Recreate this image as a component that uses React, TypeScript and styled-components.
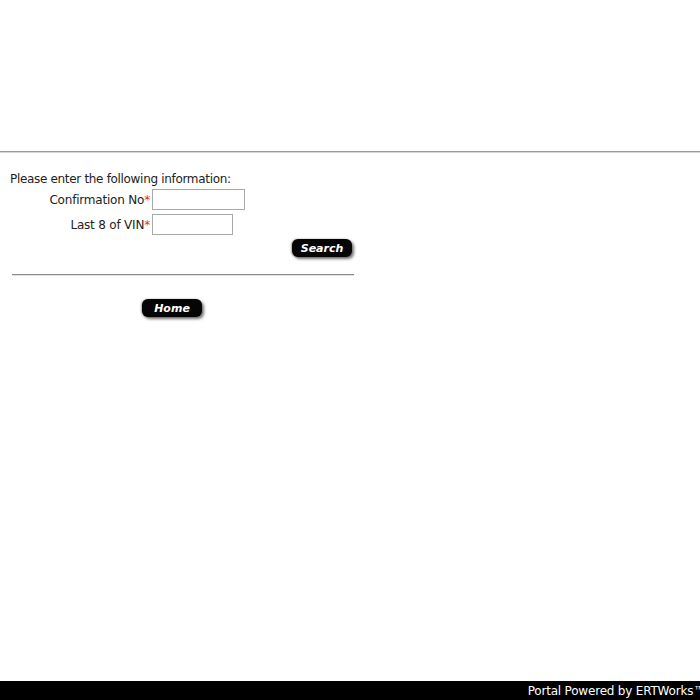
import React from "react";
import styled, { createGlobalStyle } from "styled-components";

const GlobalStyle = createGlobalStyle`
  html, body {
    margin: 0;
    padding: 0;
    background: #ffffff;
  }
  body {
    font-family: "DejaVu Sans", Verdana, sans-serif;
    font-size: 12px;
    color: #222;
  }
`;

const Page = styled.div`
  min-height: 100vh;
  display: flex;
  flex-direction: column;
`;

const Banner = styled.div`
  height: 151px;
  border-bottom: 1px solid #9a9a9a;
  box-shadow: 0 1px 0 #d6d6d6;
`;

const Main = styled.main`
  flex: 1;
  padding: 20px 0 0 10px;
`;

const Intro = styled.div`
  font-size: 12px;
  line-height: 15px;
  letter-spacing: -0.32px;
`;

const FormGrid = styled.div`
  display: grid;
  grid-template-columns: 140px auto;
  column-gap: 2px;
  row-gap: 4px;
  margin-top: 2px;
  width: 344px;
`;

const Label = styled.label`
  text-align: right;
  align-self: center;
  font-size: 12px;
  letter-spacing: -0.2px;
`;

const Required = styled.span`
  color: #e03030;
`;

const Field = styled.input<{ $w: number }>`
  box-sizing: border-box;
  width: ${(p) => p.$w}px;
  height: 21px;
  border: 1px solid #a8a8a8;
  padding: 1px 3px;
  font-family: inherit;
  font-size: 12px;
  background: #fff;
  outline: none;
`;

const ButtonRow = styled.div<{ $align: string; $mt: number }>`
  display: flex;
  justify-content: ${(p) => p.$align};
  width: 342px;
  margin-top: ${(p) => p.$mt}px;
`;

const PillButton = styled.button<{ $ml?: number }>`
  width: 60px;
  height: 18px;
  margin-left: ${(p) => p.$ml ?? 0}px;
  border: none;
  border-radius: 6px;
  background: #050505;
  color: #fff;
  font-family: "DejaVu Sans", Verdana, sans-serif;
  font-weight: bold;
  font-style: italic;
  font-size: 11px;
  line-height: 17px;
  padding: 0;
  cursor: pointer;
  box-shadow: 2px 2px 3px rgba(0, 0, 0, 0.55), -1px 0 2px rgba(0, 0, 0, 0.35);
`;

const Divider = styled.hr`
  width: 342px;
  margin: 17px 0 0 2px;
  border: none;
  border-top: 1px solid #8c8c8c;
  border-bottom: 1px solid #e2e2e2;
  height: 0;
`;

const Footer = styled.footer`
  height: 19px;
  background: #000;
  display: flex;
  justify-content: flex-end;
  align-items: center;
  overflow: hidden;
`;

const FooterText = styled.span`
  color: #fff;
  font-family: "DejaVu Sans", Verdana, sans-serif;
  font-size: 12px;
  white-space: nowrap;
  margin-right: -5px;
  letter-spacing: -0.2px;
`;

export default function App() {
  return (
    <Page>
      <GlobalStyle />
      <Banner />
      <Main>
        <Intro>Please enter the following information:</Intro>
        <FormGrid>
          <Label htmlFor="conf">
            Confirmation No<Required>*</Required>
          </Label>
          <Field id="conf" $w={93} />
          <Label htmlFor="vin">
            Last 8 of VIN<Required>*</Required>
          </Label>
          <Field id="vin" $w={81} />
        </FormGrid>
        <ButtonRow $align="flex-end" $mt={4}>
          <PillButton>Search</PillButton>
        </ButtonRow>
        <Divider />
        <ButtonRow $align="flex-start" $mt={23}>
          <PillButton $ml={132}>Home</PillButton>
        </ButtonRow>
      </Main>
      <Footer>
        <FooterText>Portal Powered by ERTWorks™</FooterText>
      </Footer>
    </Page>
  );
}
